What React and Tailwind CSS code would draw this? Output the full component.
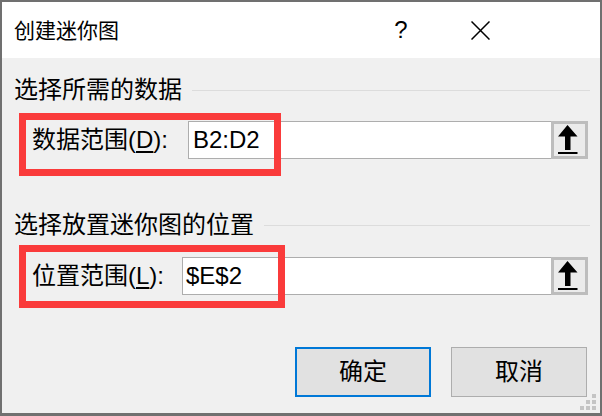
import React from "react";

const font = "font-['Liberation_Sans','Noto_Sans_CJK_SC',sans-serif]";

function PickButton() {
  return (
    <div className="relative w-[37px] h-[38px] shrink-0 border-[3px] border-[#bdbdbd] bg-[#ebebeb]">
      <svg className="absolute left-[-3px] top-[-3px]" width="37" height="38" viewBox="0 0 37 38">
        <path d="M16.5 4 L26.5 15.5 L19.5 15.5 L19.5 29 L14 29 L14 15.5 L7 15.5 Z" fill="#000" />
        <rect x="7" y="31" width="19.5" height="2" fill="#000" />
      </svg>
    </div>
  );
}

function Row({ label, hotkey, value, labelW, redW, padTop, textPad }) {
  return (
    <div className={`relative ml-[17px] h-[63px] flex items-start ${padTop}`}>
      <div className={`${labelW} shrink-0 pl-[13px] h-[38px] flex items-center text-[24px] leading-[24px] text-black`}>
        {label}(<span className="underline underline-offset-[3px]">{hotkey}</span>):
      </div>
      <div className="flex-1 mr-[12px] h-[38px] flex">
        <div className={`flex-1 h-[38px] bg-white border-y border-l border-[#adadad] flex items-center ${textPad} text-[24px] leading-[24px] text-black`}>
          {value}
        </div>
        <PickButton />
      </div>
      <div className={`absolute left-0 top-0 ${redW} h-[63px] border-[7px] border-[#fa3b3b] pointer-events-none`} />
    </div>
  );
}

export default function App() {
  return (
    <div className={`${font} relative w-[602px] h-[416px] border-2 border-b-[3px] border-[#707070] flex flex-col overflow-hidden bg-[#f0f0f0]`}>
      <div className="h-[56px] shrink-0 bg-white flex items-center">
        <span className="ml-[12px] text-[21px] leading-[21px] text-black">创建迷你图</span>
        <div className="ml-auto w-[60px] h-[56px] flex items-center justify-center text-[24px] leading-[24px] text-black">?</div>
        <div className="ml-[19px] mr-[90px] w-[60px] h-[56px] flex items-center justify-center">
          <svg width="19" height="19" viewBox="0 0 19 19">
            <path d="M0.5 0.5 L18.5 18.5 M18.5 0.5 L0.5 18.5" stroke="#000" strokeWidth="1.5" fill="none" />
          </svg>
        </div>
      </div>

      <div className="relative flex-1 flex flex-col bg-[#f0f0f0]">
        <div className="mt-[20px] ml-[12px] mr-[10px] h-[24px] flex items-center gap-[10px]">
          <span className="text-[24px] leading-[24px] text-black">选择所需的数据</span>
          <div className="flex-1 h-px bg-[#dcdcdc]" />
        </div>

        <div className="mt-[11px]">
          <Row label="数据范围" hotkey="D" value="B2:D2" labelW="w-[169px]" redW="w-[262px]" padTop="pt-[8px]" textPad="pl-[4px]" />
        </div>

        <div className="mt-[37px] ml-[12px] mr-[10px] h-[24px] flex items-center gap-[10px]">
          <span className="text-[24px] leading-[24px] text-black">选择放置迷你图的位置</span>
          <div className="flex-1 h-px bg-[#dcdcdc]" />
        </div>

        <div className="mt-[8px]">
          <Row label="位置范围" hotkey="L" value="$E$2" labelW="w-[163px]" redW="w-[266px]" padTop="pt-[12px]" textPad="pl-[3px]" />
        </div>

        <div className="mt-[39px] mr-[13px] flex justify-end gap-[20px]">
          <button className="w-[136px] h-[50px] border-2 border-[#0078d7] bg-[#e1e1e1] text-[24px] leading-[24px] text-black flex items-center justify-center">确定</button>
          <button className="w-[136px] h-[50px] border border-[#adadad] bg-[#e1e1e1] text-[24px] leading-[24px] text-black flex items-center justify-center">取消</button>
        </div>

        <svg className="absolute right-[4px] bottom-[3px]" width="16" height="16" viewBox="0 0 16 16">
          <rect x="12" y="0" width="4" height="4" fill="#c4c4c4" />
          <rect x="6" y="6" width="4" height="4" fill="#c4c4c4" />
          <rect x="12" y="6" width="4" height="4" fill="#c4c4c4" />
          <rect x="0" y="12" width="4" height="4" fill="#c4c4c4" />
          <rect x="6" y="12" width="4" height="4" fill="#c4c4c4" />
          <rect x="12" y="12" width="4" height="4" fill="#c4c4c4" />
        </svg>
      </div>
    </div>
  );
}
